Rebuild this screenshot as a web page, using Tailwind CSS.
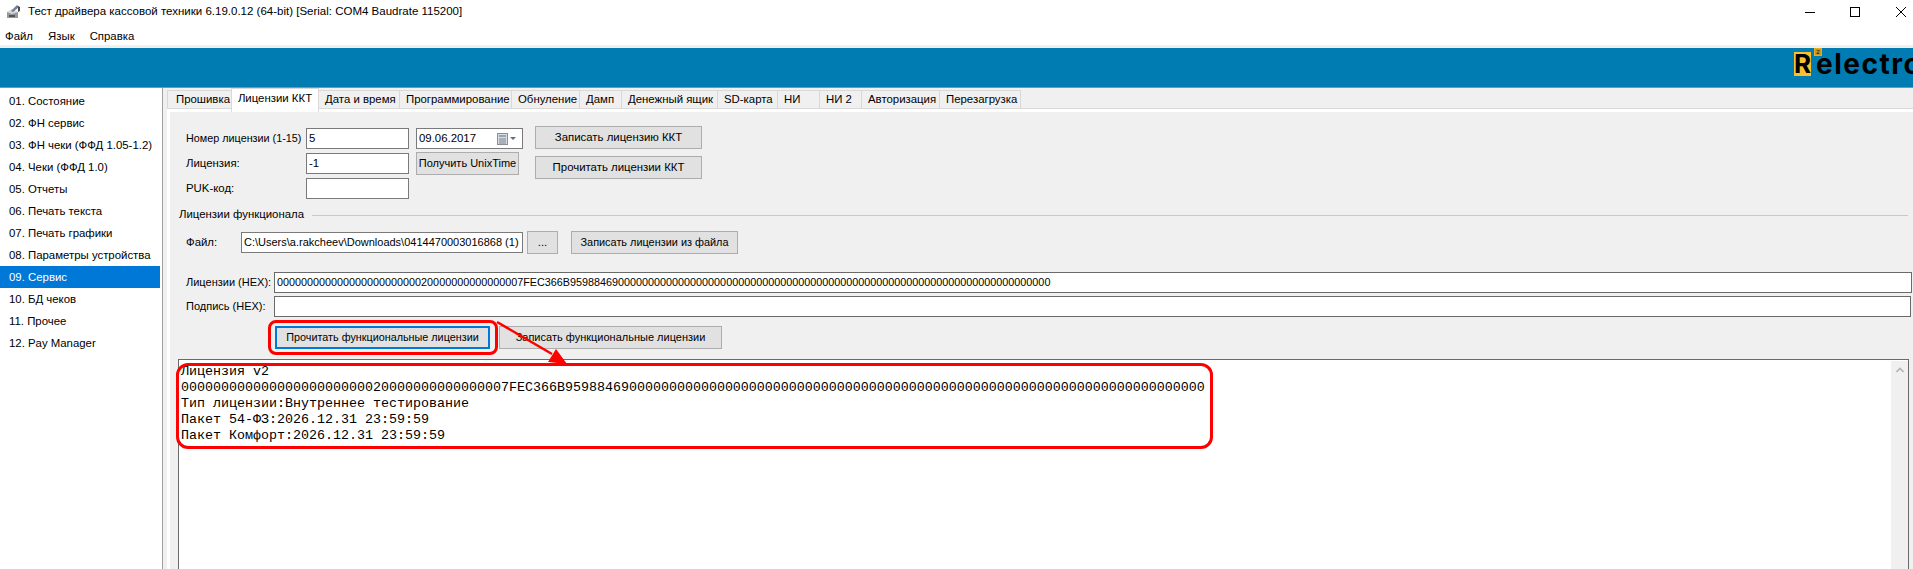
<!DOCTYPE html>
<html lang="ru">
<head>
    <meta charset="UTF-8">
    <title>Тест драйвера кассовой техники</title>
    <script src="https://cdn.jsdelivr.net/npm/@tailwindcss/browser@4"></script>
</head>
<body class="bg-white overflow-hidden">
<div class="relative w-[1913px] h-[569px] overflow-hidden flex flex-col text-[11.4px] leading-none text-black whitespace-nowrap font-['Liberation_Sans',sans-serif]">

    <!-- title bar -->
    <div class="h-6 flex items-center bg-white shrink-0">
        <svg class="ml-[6px] w-4 h-4" viewBox="0 0 16 16">
            <rect x="1" y="8" width="11" height="6" fill="#9a9a9a"/>
            <path d="M1 8l5-3 6 3-6 2z" fill="#d8d8d8"/>
            <path d="M5 7l6-6 2 2-6 5z" fill="#6f7f98"/>
            <path d="M12 2l2 1v4l-2 1z" fill="#4a4a4a"/>
            <rect x="3" y="11" width="6" height="2" fill="#555"/>
        </svg>
        <span class="ml-[6px] text-[11.5px]">Тест драйвера кассовой техники 6.19.0.12 (64-bit) [Serial: COM4 Baudrate 115200]</span>
        <div class="ml-auto flex items-center">
            <div class="w-[10px] h-px bg-black mr-[35px]"></div>
            <div class="w-[10px] h-[10px] border border-black mr-[36px]"></div>
            <svg class="w-[10px] h-[10px] mr-[7px]" viewBox="0 0 10 10"><path d="M0 0L10 10M10 0L0 10" stroke="#000" stroke-width="1"/></svg>
        </div>
    </div>

    <!-- menu -->
    <div class="h-[21px] pt-1 flex items-center bg-white shrink-0">
        <span class="ml-[5px]">Файл</span>
        <span class="ml-[15px]">Язык</span>
        <span class="ml-[15px]">Справка</span>
    </div>

    <div class="h-[3px] bg-[#f0f0f0] shrink-0"></div>

    <!-- logo band -->
    <div class="h-[40px] bg-[#007cb2] border-b border-[#5d9fbe] shrink-0 flex justify-end overflow-hidden">
        <div class="relative w-[119px] shrink-0 flex">
            <div class="mt-1 w-6 h-6 bg-[#fbc02d] flex items-center justify-center font-bold text-[26px] font-['Inter',sans-serif]">R</div>
            <div class="absolute left-5 top-0 w-2 h-2 bg-[#c9991f] border border-[#e2ae2a] text-[6px] flex items-center justify-center">2</div>
            <span class="ml-[5px] mt-[1px] font-bold text-[28px] leading-[30px] tracking-[1.5px] font-['Inter',sans-serif]">electro</span>
        </div>
    </div>

    <div class="flex-1 flex min-h-0 bg-[#f0f0f0]">
        <!-- left nav -->
        <div class="w-[163px] shrink-0 bg-white border-r border-[#a0a0a0] pt-[2px] pr-[2px]">
            <div class="h-[22px] pl-[9px] pt-px flex items-center">01. Состояние</div>
            <div class="h-[22px] pl-[9px] pt-px flex items-center">02. ФН сервис</div>
            <div class="h-[22px] pl-[9px] pt-px flex items-center">03. ФН чеки (ФФД 1.05-1.2)</div>
            <div class="h-[22px] pl-[9px] pt-px flex items-center">04. Чеки (ФФД 1.0)</div>
            <div class="h-[22px] pl-[9px] pt-px flex items-center">05. Отчеты</div>
            <div class="h-[22px] pl-[9px] pt-px flex items-center">06. Печать текста</div>
            <div class="h-[22px] pl-[9px] pt-px flex items-center">07. Печать графики</div>
            <div class="h-[22px] pl-[9px] pt-px flex items-center">08. Параметры устройства</div>
            <div class="h-[22px] pl-[9px] pt-px flex items-center bg-[#0078d7] text-white">09. Сервис</div>
            <div class="h-[22px] pl-[9px] pt-px flex items-center">10. БД чеков</div>
            <div class="h-[22px] pl-[9px] pt-px flex items-center">11. Прочее</div>
            <div class="h-[22px] pl-[9px] pt-px flex items-center">12. Pay Manager</div>
        </div>

        <!-- tab control -->
        <div class="flex-1 min-w-0 flex flex-col pl-1">
            <div class="h-6 flex shrink-0 relative">
                <div class="absolute left-0 right-0 top-5 h-px bg-[#d9d9d9]"></div>
                <div class="absolute left-0 right-0 top-[21px] h-[3px] bg-white"></div>
                <div class="relative mt-[2px] h-[19px] w-[64px] pl-2 flex items-center border border-[#d9d9d9] border-r-0">Прошивка</div>
                <div class="relative h-6 w-[88px] flex items-start pt-1 justify-center bg-white border-x border-t border-[#d9d9d9]">Лицензии ККТ</div>
                <div class="relative mt-[2px] h-[19px] w-[81px] pl-[6px] flex items-center border border-[#d9d9d9] border-l-0">Дата и время</div>
                <div class="relative mt-[2px] h-[19px] w-[112px] pl-[6px] flex items-center border border-[#d9d9d9] border-l-0">Программирование</div>
                <div class="relative mt-[2px] h-[19px] w-[68px] pl-[6px] flex items-center border border-[#d9d9d9] border-l-0">Обнуление</div>
                <div class="relative mt-[2px] h-[19px] w-[42px] pl-[6px] flex items-center border border-[#d9d9d9] border-l-0">Дамп</div>
                <div class="relative mt-[2px] h-[19px] w-[96px] pl-[6px] flex items-center border border-[#d9d9d9] border-l-0">Денежный ящик</div>
                <div class="relative mt-[2px] h-[19px] w-[60px] pl-[6px] flex items-center border border-[#d9d9d9] border-l-0">SD-карта</div>
                <div class="relative mt-[2px] h-[19px] w-[42px] pl-[6px] flex items-center border border-[#d9d9d9] border-l-0">НИ</div>
                <div class="relative mt-[2px] h-[19px] w-[42px] pl-[6px] flex items-center border border-[#d9d9d9] border-l-0">НИ 2</div>
                <div class="relative mt-[2px] h-[19px] w-[78px] pl-[6px] flex items-center border border-[#d9d9d9] border-l-0">Авторизация</div>
                <div class="relative mt-[2px] h-[19px] w-[81px] pl-[6px] flex items-center border border-[#d9d9d9] border-l-0">Перезагрузка</div>
            </div>

            <div class="flex-1 min-h-0 border-l-[3px] border-white flex flex-col">
                <!-- license form -->
                <div class="flex pl-[16px] pt-[15px] h-[88px] shrink-0">
                    <div class="w-[230px] flex flex-col pt-px gap-1">
                        <div class="flex items-center h-[21px]">
                            <span class="w-[120px] shrink-0 text-[10.8px]">Номер лицензии (1-15)</span>
                            <div class="w-[103px] h-full bg-white border border-[#7a7a7a] pl-[2px] flex items-center">5</div>
                        </div>
                        <div class="flex items-center h-[21px]">
                            <span class="w-[120px] shrink-0">Лицензия:</span>
                            <div class="w-[103px] h-full bg-white border border-[#7a7a7a] pl-[2px] flex items-center">-1</div>
                        </div>
                        <div class="flex items-center h-[21px]">
                            <span class="w-[120px] shrink-0">PUK-код:</span>
                            <div class="w-[103px] h-full bg-white border border-[#7a7a7a]"></div>
                        </div>
                    </div>
                    <div class="w-[119px] flex flex-col pt-px">
                        <div class="w-[107px] h-[21px] bg-white border border-[#7a7a7a] pl-[2px] flex items-center">
                            09.06.2017
                            <svg class="ml-auto mr-[6px] w-[19px] h-3" viewBox="0 0 19 12">
                                <rect x="0.5" y="0.5" width="10" height="11" fill="#d8dde2" stroke="#8a8f96"/>
                                <rect x="2" y="2" width="7" height="2" fill="#8fa7c4"/>
                                <path d="M2 6h7M2 8h7M2 10h7" stroke="#7c8188"/>
                                <path d="M13 4h6l-3 3z" fill="#5b6f8c"/>
                            </svg>
                        </div>
                        <div class="mt-[3px] w-[103px] h-[23px] bg-[#e1e1e1] border border-[#adadad] flex items-center justify-center text-[11px]">Получить UnixTime</div>
                    </div>
                    <div class="w-[167px] flex flex-col -mt-px">
                        <div class="h-[23px] bg-[#e1e1e1] border border-[#adadad] flex items-center justify-center">Записать лицензию ККТ</div>
                        <div class="mt-[7px] h-[23px] bg-[#e1e1e1] border border-[#adadad] flex items-center justify-center">Прочитать лицензии ККТ</div>
                    </div>
                </div>

                <!-- group caption -->
                <div class="flex items-center h-[14px] mt-[8px] pl-[9px] pr-[5px] shrink-0">
                    <span>Лицензии функционала</span>
                    <div class="flex-1 h-px bg-[#c8c8c8] ml-2"></div>
                </div>

                <!-- file row -->
                <div class="flex items-center h-[23px] mt-[9px] pl-[16px] shrink-0">
                    <span class="w-[55px] shrink-0">Файл:</span>
                    <div class="w-[282px] h-[21px] bg-white border border-[#7a7a7a] pl-[2px] flex items-center overflow-hidden text-[11px]">C:\Users\a.rakcheev\Downloads\0414470003016868 (1)</div>
                    <div class="ml-1 w-[31px] h-[23px] bg-[#e1e1e1] border border-[#adadad] flex items-center justify-center">...</div>
                    <div class="ml-[13px] w-[167px] h-[23px] bg-[#e1e1e1] border border-[#adadad] flex items-center justify-center text-[10.9px]">Записать лицензии из файла</div>
                </div>

                <!-- hex rows -->
                <div class="flex items-center h-[21px] mt-[18px] pl-[16px] pr-px shrink-0">
                    <span class="w-[88px] shrink-0 text-[11px]">Лицензии (HEX):</span>
                    <div class="flex-1 h-full bg-white border border-[#6a6a6a] pl-[2px] flex items-center text-[10.8px]">00000000000000000000000020000000000000007FEC366B95988469000000000000000000000000000000000000000000000000000000000000000000000000</div>
                </div>
                <div class="flex items-center h-[21px] mt-[3px] pl-[16px] pr-[2px] shrink-0">
                    <span class="w-[88px] shrink-0 text-[11px]">Подпись (HEX):</span>
                    <div class="flex-1 h-full bg-white border border-[#6a6a6a]"></div>
                </div>

                <!-- read / write buttons -->
                <div class="flex h-[23px] mt-[9px] pl-[105px] shrink-0">
                    <div class="w-[215px] bg-[#e1e1e1] border-2 border-[#0078d7] flex items-center justify-center text-[10.8px]">Прочитать функциональные лицензии</div>
                    <div class="ml-[9px] w-[223px] bg-[#e1e1e1] border border-[#adadad] flex items-center justify-center text-[11px]">Записать функциональные лицензии</div>
                </div>

                <!-- output box -->
                <div class="flex-1 min-h-0 mt-[10px] ml-[8px] mr-[4px] bg-white border border-[#6a6a6a] border-b-0 flex">
                    <div class="flex-1 pt-1 pl-[2px] font-['Liberation_Mono',monospace] text-[13.33px] leading-4 whitespace-pre">Лицензия v2
00000000000000000000000020000000000000007FEC366B95988469000000000000000000000000000000000000000000000000000000000000000000000000
Тип лицензии:Внутреннее тестирование
Пакет 54-ФЗ:2026.12.31 23:59:59
Пакет Комфорт:2026.12.31 23:59:59</div>
                    <div class="w-[17px] mt-px bg-[#f0f0f0] flex justify-center pt-[6px]">
                        <svg class="w-2 h-[6px]" viewBox="0 0 8 6"><path d="M0.5 5L4 1.5 7.5 5" fill="none" stroke="#b4b4b4" stroke-width="1.6"/></svg>
                    </div>
                </div>
            </div>
        </div>
    </div>

    <!-- red annotations -->
    <div class="absolute left-[268px] top-[320px] w-[230px] h-[35px] border-[3px] border-[#ff0000] rounded-[8px]"></div>
    <div class="absolute left-[176px] top-[363px] w-[1037px] h-[86px] border-[3px] border-[#ff0000] rounded-[12px]"></div>
    <svg class="absolute left-0 top-0 w-[1913px] h-[569px] pointer-events-none" viewBox="0 0 1913 569">
        <path d="M497 322L552 354" stroke="#ff0000" stroke-width="2.5" fill="none"/>
        <path d="M567 364L548 362L556 349z" fill="#ff0000"/>
    </svg>
</div>
</body>
</html>
